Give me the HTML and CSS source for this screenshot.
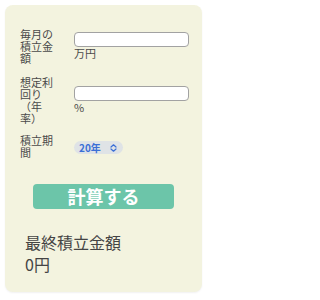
FILE: index.html
```html
<!DOCTYPE html>
<html lang="ja">
<head>
<meta charset="utf-8">
<link rel="stylesheet" href="styles.css">
</head>
<body>
<div class="card">
  <div class="form">
    <div class="label">毎月の積立金額</div>
    <div class="field">
      <input class="input" type="text">
      <div class="unit">万円</div>
    </div>
    <div class="label">想定利回り（年率）</div>
    <div class="field">
      <input class="input" type="text">
      <div class="unit">%</div>
    </div>
    <div class="label label-last">積立期間</div>
    <div class="field">
      <div class="select">
        <span class="select-text">20年</span>
        <svg class="chev" width="7" height="8" viewBox="0 0 7 8"><path d="M1 3 L3.5 0.8 L6 3 M1 5 L3.5 7.2 L6 5" fill="none" stroke="#3b6fd6" stroke-width="1.2" stroke-linecap="round" stroke-linejoin="round"/></svg>
      </div>
    </div>
  </div>
  <div class="button">計算する</div>
  <div class="result">
    <div>最終積立金額</div>
    <div>0円</div>
  </div>
</div>
</body>
</html>
```
FILE: styles.css
```css
html, body {
  margin: 0;
  padding: 0;
  background: #ffffff;
}
body {
  font-family: "Noto Sans CJK JP", "Noto Sans", sans-serif;
  color: #4a4a4a;
}
.card {
  margin: 5px;
  width: 197px;
  height: 287px;
  box-sizing: border-box;
  padding: 23px 13px 0 15px;
  background: #f3f3df;
  border-radius: 8px;
  box-shadow: 0 1px 2px rgba(0,0,0,0.06);
}
.form {
  display: grid;
  grid-template-columns: 40px 1fr;
  column-gap: 14px;
  row-gap: 12px;
}
.label {
  font-size: 11px;
  line-height: 12px;
  color: #4a4a4a;
  text-spacing-trim: space-all;
}
.label-last {
  margin-top: -2px;
}
.field {
  align-self: center;
  display: flex;
  flex-direction: column;
  align-items: flex-start;
}
.input {
  width: 115px;
  height: 15px;
  box-sizing: border-box;
  margin: -1px 0 0;
  padding: 0 3px;
  border: 1px solid #a2a2a2;
  border-radius: 4px;
  background: #fff;
  font-size: 10px;
}
.unit {
  font-size: 11px;
  line-height: 12px;
  margin-top: 0;
  color: #4a4a4a;
}
.select {
  display: flex;
  align-items: center;
  gap: 9px;
  height: 13px;
  width: 49px;
  box-sizing: border-box;
  padding-left: 5px;
  border-radius: 7px;
  background: #dfe3e6;
  margin-top: 1px;
}
.select-text {
  font-size: 10px;
  font-weight: bold;
  line-height: 13px;
  color: #3b6fd6;
}
.chev {
  display: block;
}
.button {
  width: 141px;
  height: 25px;
  margin: 26px auto 0;
  border-radius: 4px;
  background: #6cc5a9;
  color: #fff;
  font-weight: bold;
  font-size: 18px;
  line-height: 25px;
  text-align: center;
  position: relative;
  left: -1px;
}
.result {
  margin-top: 22px;
  padding-left: 5px;
  font-size: 16px;
  line-height: 22px;
  color: #444;
}
```
